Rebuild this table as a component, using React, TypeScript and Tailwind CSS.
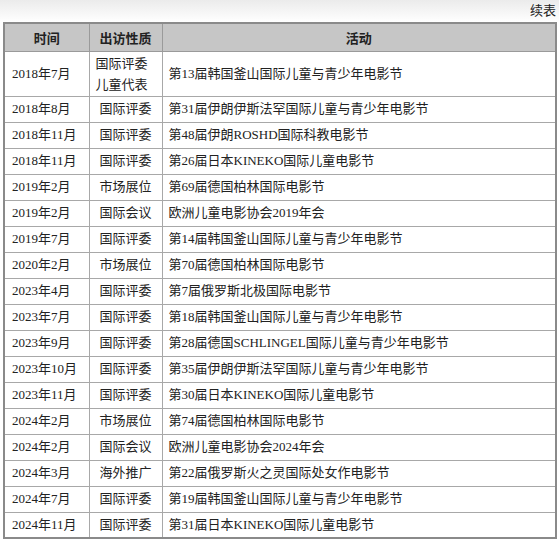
const rows: [string, string, string][] = [
  ["2018年8月", "国际评委", "第31届伊朗伊斯法罕国际儿童与青少年电影节"],
  ["2018年11月", "国际评委", "第48届伊朗ROSHD国际科教电影节"],
  ["2018年11月", "国际评委", "第26届日本KINEKO国际儿童电影节"],
  ["2019年2月", "市场展位", "第69届德国柏林国际电影节"],
  ["2019年2月", "国际会议", "欧洲儿童电影协会2019年会"],
  ["2019年7月", "国际评委", "第14届韩国釜山国际儿童与青少年电影节"],
  ["2020年2月", "市场展位", "第70届德国柏林国际电影节"],
  ["2023年4月", "国际评委", "第7届俄罗斯北极国际电影节"],
  ["2023年7月", "国际评委", "第18届韩国釜山国际儿童与青少年电影节"],
  ["2023年9月", "国际评委", "第28届德国SCHLINGEL国际儿童与青少年电影节"],
  ["2023年10月", "国际评委", "第35届伊朗伊斯法罕国际儿童与青少年电影节"],
  ["2023年11月", "国际评委", "第30届日本KINEKO国际儿童电影节"],
  ["2024年2月", "市场展位", "第74届德国柏林国际电影节"],
  ["2024年2月", "国际会议", "欧洲儿童电影协会2024年会"],
  ["2024年3月", "海外推广", "第22届俄罗斯火之灵国际处女作电影节"],
  ["2024年7月", "国际评委", "第19届韩国釜山国际儿童与青少年电影节"],
  ["2024年11月", "国际评委", "第31届日本KINEKO国际儿童电影节"],
];

export default function App() {
  return (
    <div className="w-[559px] h-[541px] bg-white overflow-hidden text-[#222] font-['Liberation_Serif','Noto_Sans_CJK_SC',serif]">
      <div className="h-[22px] bg-gradient-to-b from-[#ebebeb] to-white flex justify-end items-end pb-[2px] pr-[3px] text-[13px]">
        续表
      </div>
      <div className="pl-[3px] pr-[2px]">
        <table className="w-full border-collapse border-2 border-[#8a8a8a] text-[13px] table-fixed">
          <colgroup>
            <col className="w-[85px]" />
            <col className="w-[73px]" />
            <col />
          </colgroup>
          <thead>
            <tr className="h-[28px] bg-[#c6c6c6] font-['Noto_Sans_CJK_SC',sans-serif] font-bold text-[13px]">
              <th className="border border-[#9a9a9a]">时间</th>
              <th className="border border-[#9a9a9a]">出访性质</th>
              <th className="border border-[#9a9a9a]">活动</th>
            </tr>
          </thead>
          <tbody>
            <tr className="h-[45px]">
              <td className="border border-[#a8a8a8] pl-[7px]">2018年7月</td>
              <td className="border border-[#a8a8a8] px-[6px] leading-[21px]">
                国际评委
                <br />
                儿童代表
              </td>
              <td className="border border-[#a8a8a8] pl-[6px]">第13届韩国釜山国际儿童与青少年电影节</td>
            </tr>
            {rows.map(([t, k, a], i) => (
              <tr key={i} className="h-[26px]">
                <td className="border border-[#a8a8a8] pl-[7px] whitespace-nowrap">{t}</td>
                <td className="border border-[#a8a8a8] text-center whitespace-nowrap">{k}</td>
                <td className="border border-[#a8a8a8] pl-[6px] whitespace-nowrap">{a}</td>
              </tr>
            ))}
          </tbody>
        </table>
      </div>
    </div>
  );
}
